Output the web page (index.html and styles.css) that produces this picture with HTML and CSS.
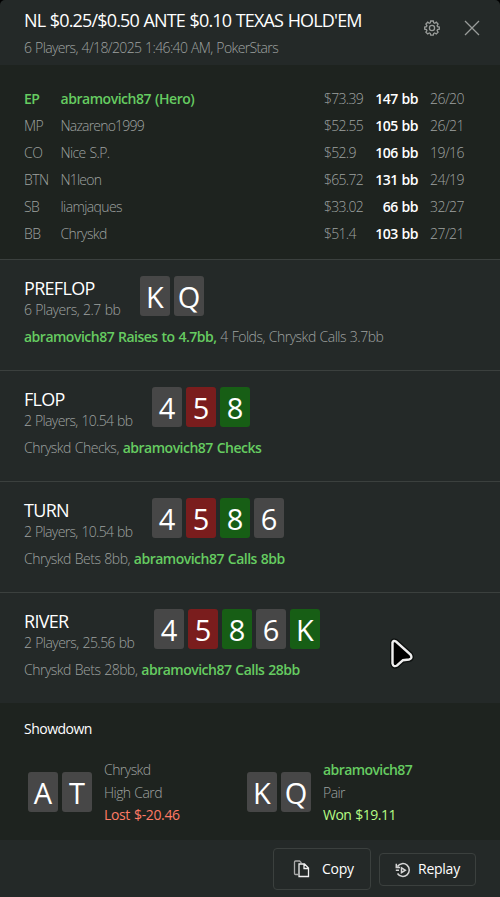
FILE: index.html
```html
<!DOCTYPE html>
<html lang="en">
<head>
<meta charset="utf-8">
<title>Hand details</title>
<link rel="stylesheet" href="styles.css">
</head>
<body>
<main class="panel">
  <header class="header">
    <div>
      <h1 class="title">NL $0.25/$0.50 ANTE $0.10 TEXAS HOLD'EM</h1>
      <p class="subtitle">6 Players, 4/18/2025 1:46:40 AM, PokerStars</p>
    </div>
    <div class="tools">
      <svg class="gear" width="16" height="16" viewBox="0 0 16 16"><path d="M6.700 1h2.600l.4 1.800 1 .4 1.600-1 1.800 1.800-1 1.600.4 1 1.800.4v2.200l-1.800.4-.4 1 1 1.600-1.800 1.800-1.600-1-1 .4-.4 1.700H6.700l-.4-1.700-1-.4-1.600 1-1.800-1.800 1-1.600-.4-1L.7 9.200V7l1.800-.4.4-1-1-1.600 1.800-1.800 1.600 1 1-.4z"/><circle cx="8" cy="8" r="2.600"/></svg>
      <svg class="close" width="16" height="16" viewBox="0 0 16 16"><path d="M1 1l14 14M15 1L1 15"/></svg>
    </div>
  </header>

  <section class="players">
    <div class="player hero"><span>EP</span><span>abramovich87 (Hero)</span><span class="cash">$73.39</span><span class="bb">147 bb</span><span class="stats">26/20</span></div>
    <div class="player"><span>MP</span><span class="name tight">Nazareno1999</span><span class="cash">$52.55</span><span class="bb">105 bb</span><span class="stats">26/21</span></div>
    <div class="player"><span>CO</span><span class="name">Nice S.P.</span><span class="cash">$52.9</span><span class="bb">106 bb</span><span class="stats">19/16</span></div>
    <div class="player"><span>BTN</span><span class="name tight">N1leon</span><span class="cash">$65.72</span><span class="bb">131 bb</span><span class="stats">24/19</span></div>
    <div class="player"><span>SB</span><span class="name">liamjaques</span><span class="cash">$33.02</span><span class="bb">66 bb</span><span class="stats">32/27</span></div>
    <div class="player"><span>BB</span><span class="name">Chryskd</span><span class="cash">$51.4</span><span class="bb">103 bb</span><span class="stats">27/21</span></div>
  </section>

  <section class="street">
    <div class="street-head">
      <div class="info info-preflop"><h2>PREFLOP</h2><p>6 Players, 2.7 bb</p></div>
      <div class="cards"><span class="card">K</span><span class="card">Q</span></div>
    </div>
    <p class="actions"><b>abramovich87 Raises to 4.7bb,</b> 4 Folds, Chryskd Calls 3.7bb</p>
  </section>

  <section class="street">
    <div class="street-head">
      <div class="info"><h2>FLOP</h2><p class="tenths">2 Players, 10.54 bb</p></div>
      <div class="cards"><span class="card">4</span><span class="card red">5</span><span class="card green">8</span></div>
    </div>
    <p class="actions">Chryskd Checks, <b>abramovich87 Checks</b></p>
  </section>

  <section class="street">
    <div class="street-head">
      <div class="info"><h2>TURN</h2><p class="tenths">2 Players, 10.54 bb</p></div>
      <div class="cards"><span class="card">4</span><span class="card red">5</span><span class="card green">8</span><span class="card">6</span></div>
    </div>
    <p class="actions">Chryskd Bets 8bb, <b>abramovich87 Calls 8bb</b></p>
  </section>

  <section class="street">
    <div class="street-head">
      <div class="info info-river"><h2>RIVER</h2><p>2 Players, 25.56 bb</p></div>
      <div class="cards"><span class="card">4</span><span class="card red">5</span><span class="card green">8</span><span class="card">6</span><span class="card green">K</span></div>
    </div>
    <p class="actions">Chryskd Bets 28bb, <b>abramovich87 Calls 28bb</b></p>
  </section>

  <section class="showdown">
    <h3>Showdown</h3>
    <div class="results">
      <div class="result">
        <div class="cards"><span class="card">A</span><span class="card">T</span></div>
        <div class="outcome"><p>Chryskd</p><p>High Card</p><p class="lost">Lost $-20.46</p></div>
      </div>
      <div class="result">
        <div class="cards"><span class="card">K</span><span class="card">Q</span></div>
        <div class="outcome"><p><b>abramovich87</b></p><p>Pair</p><p class="won">Won $19.11</p></div>
      </div>
    </div>
  </section>

  <footer class="footer">
    <button class="btn btn-copy"><svg width="17" height="18" viewBox="0 0 17 18"><path class="dim" d="M5 14.500H2.500Q1.500 14.500 1.500 13.500V2Q1.500 1 2.500 1H6.500L8.500 3"/><path d="M6 4h5.500L15.500 8v8.500H6zM11 4v4.500h4.500"/></svg>Copy</button>
    <button class="btn btn-replay"><svg width="16" height="16" viewBox="0 0 16 16"><path class="bold" d="M2.500 4.500A6.400 6.400 0 1 1 2.500 11.500M1.300 1.800V5.500H5M.8 8.300H4"/><path class="bold" d="M6.500 5.800v4.800L10.300 8.200z"/></svg>Replay</button>
  </footer>
  <svg class="cursor" width="26" height="32" viewBox="0 0 26 32"><path class="halo" d="M3.500 4.500Q4.500 2 7 3.500L21.500 16.500Q24 20.500 20 21.500L14 22.200L8 27.500Q4.500 29.500 3.500 25.500Z"/><path class="arrow" d="M3.500 4.500Q4.500 2 7 3.500L21.500 16.500Q24 20.500 20 21.500L14 22.200L8 27.500Q4.500 29.500 3.500 25.500Z"/></svg>
</main>
</body>
</html>
```
FILE: styles.css
```css
* { box-sizing: border-box; margin: 0; padding: 0; }
body { background: #000; }
svg { fill: none; stroke: #fff; flex: none; }

.panel {
  position: relative;
  width: 500px;
  height: 897px;
  overflow: hidden;
  border-radius: 5px 5px 0 0;
  background: #242928;
  color: #9fa2a0;
  font: 300 14px/20px "Open Sans", "Liberation Sans", sans-serif;
  letter-spacing: -0.55px;
  word-spacing: 0.7px;
  white-space: nowrap;
}

b { font-weight: 600; color: #66cc61; letter-spacing: -0.5px; }

.header {
  display: flex;
  justify-content: space-between;
  height: 65px;
  padding: 8px 20px 0 24px;
}
.title {
  margin-bottom: 6px;
  color: #fff;
  font-size: 18px;
  font-weight: 400;
  line-height: 24px;
  letter-spacing: -0.84px;
}
.subtitle { letter-spacing: -0.63px; }
.tools { display: flex; gap: 24px; padding-top: 12px; }
.tools svg { stroke: #999c9a; }
.gear { stroke-width: 1.3; }
.close { stroke-width: 1.3; }

.players { height: 194px; padding: 20px 12px 0 24px; background: #1e231f; }
.player {
  display: grid;
  grid-template-columns: 36.5px 1fr 44px 50px 58px;
  width: 452px;
  line-height: 27px;
}
.hero { color: #66cc61; font-weight: 600; letter-spacing: -0.46px; }
.name { letter-spacing: -0.6px; }
.tight { letter-spacing: -0.8px; }
.cash, .stats { color: #9fa2a0; font-weight: 300; letter-spacing: -0.7px; }
.stats { padding-left: 12px; letter-spacing: -0.55px; }
.bb { color: #fff; font-weight: 600; text-align: right; letter-spacing: -0.5px; }

.street { height: 111px; padding: 16px 24px 0; border-top: 1px solid #3b403e; }
.street-head { display: flex; height: 44px; margin-bottom: 7px; }
.info { width: 128px; }
.info-preflop { width: 116px; }
.info-river { width: 130px; }
.info h2 {
  color: #fff;
  font-size: 18px;
  font-weight: 400;
  line-height: 24px;
  letter-spacing: -0.7px;
}
.info-preflop p { letter-spacing: -0.5px; }
.tenths { letter-spacing: -0.65px; }
.actions { letter-spacing: -0.5px; }

.cards { display: flex; gap: 4px; height: 40px; }
.card {
  width: 30px;
  height: 40px;
  border-radius: 3px;
  background: #474747;
  color: #fff;
  font-size: 29px;
  font-weight: 400;
  line-height: 42px;
  text-align: center;
  letter-spacing: 0;
}
.red { background: #7a1d1d; }
.green { background: #175e15; }

.showdown { height: 137px; padding: 16px 24px 0; background: #1e231f; }
.showdown h3 { color: #fff; font-size: 14px; font-weight: 400; letter-spacing: -0.5px; }
.results { display: grid; grid-template-columns: 219px 1fr; padding: 20px 0 0 4px; }
.result { display: flex; gap: 12px; }
.result .cards { margin-top: 13px; }
.outcome { line-height: 22.5px; }
.outcome b { letter-spacing: -0.58px; }
.lost, .won { font-weight: 400; letter-spacing: -0.35px; }
.lost { color: #ff7b66; }
.won { color: #b5fc84; letter-spacing: -0.5px; }

.footer { display: flex; justify-content: flex-end; align-items: center; gap: 8px; height: 57px; padding: 1px 24px 0; }
.btn {
  display: flex;
  align-items: center;
  border: 1px solid #3b403e;
  border-radius: 4px;
  background: transparent;
  color: #fff;
  font: 400 14px/20px "Open Sans", "Liberation Sans", sans-serif;
  letter-spacing: -0.25px;
}
.btn-copy { gap: 12px; width: 98px; height: 42px; padding-left: 19px; }
.btn-replay { gap: 7px; width: 97px; height: 33px; padding-left: 15px; }
.btn svg { stroke: #f0f0f0; stroke-width: 1.3; }
.btn .dim { stroke: #aaa; }
.btn .bold { stroke: #d5d5d5; stroke-width: 1.5; }
.btn-replay svg { margin-top: 1px; }

.cursor { position: absolute; left: 389px; top: 638px; }
.cursor .halo { stroke: #0c0f0e; stroke-width: 5; }
.cursor .arrow { fill: #000; stroke: #eee; stroke-width: 2.4; }
```
